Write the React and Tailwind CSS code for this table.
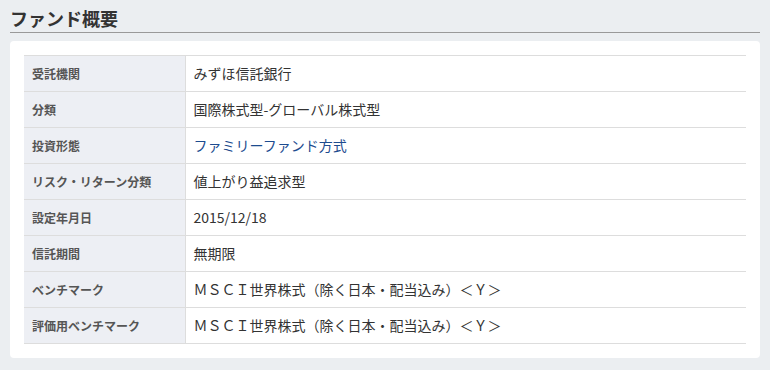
const rows = [
  { label: '受託機関', value: 'みずほ信託銀行' },
  { label: '分類', value: '国際株式型-グローバル株式型' },
  { label: '投資形態', value: 'ファミリーファンド方式', link: true },
  { label: 'リスク・リターン分類', value: '値上がり益追求型' },
  { label: '設定年月日', value: '2015/12/18' },
  { label: '信託期間', value: '無期限' },
  { label: 'ベンチマーク', value: 'ＭＳＣＩ世界株式（除く日本・配当込み）＜Ｙ＞' },
  { label: '評価用ベンチマーク', value: 'ＭＳＣＩ世界株式（除く日本・配当込み）＜Ｙ＞' },
]

export default function App() {
  return (
    <div
      className="min-h-[370px] w-[770px] bg-[#ebeef1] px-[10px]"
      style={{ fontFamily: '"Noto Sans CJK JP", "Noto Sans", sans-serif' }}
    >
      <h2 className="border-b border-[#999] pt-[6px] pb-[2px] text-[18px] font-bold leading-[24px] text-[#333]">
        ファンド概要
      </h2>
      <div className="mt-[8px] rounded-[4px] bg-white px-[14px] py-[14px]">
        <table className="w-full border-collapse">
          <tbody>
            {rows.map((r) => (
              <tr key={r.label} className="h-[36px] border-y border-[#ddd]">
                <th className="w-[161px] border-r border-[#ddd] bg-[#edeff4] pl-[8px] text-left text-[12px] font-bold text-[#555]">
                  {r.label}
                </th>
                <td
                  className={`pl-[8px] text-[14px] ${r.link ? 'text-[#1d4c8f]' : 'text-[#333]'}`}
                >
                  {r.value}
                </td>
              </tr>
            ))}
          </tbody>
        </table>
      </div>
    </div>
  )
}
